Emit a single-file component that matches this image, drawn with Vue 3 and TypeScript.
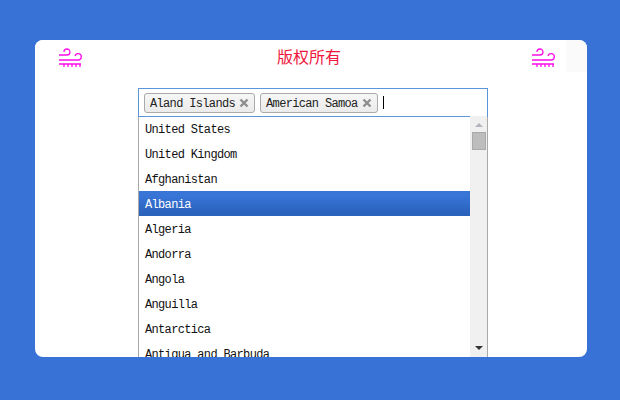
<script setup lang="ts">
const chips: string[] = ['Aland Islands', 'American Samoa']
const countries: string[] = [
  'United States',
  'United Kingdom',
  'Afghanistan',
  'Albania',
  'Algeria',
  'Andorra',
  'Angola',
  'Anguilla',
  'Antarctica',
  'Antigua and Barbuda',
]
const active = 'Albania'
</script>

<template>
  <div class="page">
    <div class="card">
      <header class="head">
        <svg class="wind" viewBox="0 0 24 20" width="24" height="20">
          <path d="M1 7H9a3 3 0 1 0-3-3M1 12H20a3.200 3.200 0 1 0-3-4M1 16H23M6 16v3M10 16v3M14 16v3M18 16v3M22 16v3" />
        </svg>
        <h1>版权所有</h1>
        <svg class="wind" viewBox="0 0 24 20" width="24" height="20">
          <path d="M1 7H9a3 3 0 1 0-3-3M1 12H20a3.200 3.200 0 1 0-3-4M1 16H23M6 16v3M10 16v3M14 16v3M18 16v3M22 16v3" />
        </svg>
      </header>

      <div class="select">
        <div class="choices">
          <span v-for="chip in chips" :key="chip" class="chip">
            {{ chip }}
            <svg viewBox="0 0 10 10" width="10" height="10">
              <path d="M1.500 1.500l7 7M8.500 1.500l-7 7" />
            </svg>
          </span>
          <i class="cursor"></i>
        </div>
        <div class="drop">
          <ul>
            <li v-for="c in countries" :key="c" :class="{ on: c === active }">{{ c }}</li>
          </ul>
          <div class="scroll">
            <b class="up"></b>
            <div class="thumb"></div>
            <b class="down"></b>
          </div>
        </div>
      </div>
    </div>
  </div>
</template>

<style>
html,
body {
  margin: 0;
  background: #3872d6;
}
</style>

<style scoped>
.page {
  height: 400px;
  padding-top: 40px;
  box-sizing: border-box;
  background: #3872d6;
}
.card {
  width: 552px;
  height: 317px;
  margin-left: 35px;
  background: #fff;
  border-radius: 8px;
  overflow: hidden;
  display: flex;
  flex-direction: column;
}
.head {
  height: 32px;
  flex: none;
  display: flex;
  align-items: center;
  justify-content: space-between;
  padding: 0 32px 0 23px;
  background: linear-gradient(90deg, #fff 0, #fff 531px, #fafafa 531px);
}
.head h1 {
  margin: 0 0 0 5px;
  font: 400 16px "Noto Sans CJK SC", sans-serif;
  color: #f0163c;
}
.wind {
  margin-top: 4px;
  fill: none;
  stroke: #fb0ee8;
  stroke-width: 1.3;
}
.select {
  width: 350px;
  height: 269px;
  margin: 16px 0 0 103px;
  box-sizing: border-box;
  display: flex;
  flex-direction: column;
  font: 12px "Liberation Mono", monospace;
  letter-spacing: -0.66px;
  color: #111;
}
.choices {
  height: 29px;
  flex: none;
  box-sizing: border-box;
  border: 1px solid #5b97d8;
  display: flex;
  align-items: center;
  gap: 5px;
  padding-left: 5px;
}
.chip {
  height: 20px;
  box-sizing: border-box;
  display: flex;
  align-items: center;
  gap: 4px;
  padding: 2px 5px 0;
  border: 1px solid #aaa;
  border-radius: 3px;
  background: linear-gradient(#f6f6f6, #ebebeb);
  color: #222;
}
.chip svg {
  margin-top: -2px;
  fill: none;
  stroke: #8d8d8d;
  stroke-width: 2.4;
}
.cursor {
  width: 1px;
  height: 13px;
  background: #000;
}
.drop {
  flex: 1;
  min-height: 0;
  display: flex;
  box-sizing: border-box;
  border-left: 1px solid #a9a9a9;
  border-right: 1px solid #a9a9a9;
}
ul {
  flex: 1;
  margin: -1px 0 0;
  padding: 0;
  list-style: none;
  overflow: hidden;
}
li {
  height: 25px;
  line-height: 28px;
  padding-left: 6px;
}
li.on {
  color: #fff;
  background: linear-gradient(#3875d7 20%, #2a62bc 90%);
}
.scroll {
  width: 17px;
  flex: none;
  display: flex;
  flex-direction: column;
  align-items: center;
  background: #f0f0f0;
  margin-top: -1px;
  padding-top: 7px;
  box-sizing: border-box;
}
.up {
  width: 0;
  border: 4px solid transparent;
  border-top: 0;
  border-bottom: 4px solid #b4b4c0;
}
.thumb {
  width: 12px;
  height: 16px;
  margin-top: 5px;
  background: #bdbdbd;
  border: 1px solid #aaa;
}
.down {
  width: 0;
  margin-top: auto;
  margin-bottom: 7px;
  border: 4px solid transparent;
  border-bottom: 0;
  border-top: 4px solid #333;
}
</style>
